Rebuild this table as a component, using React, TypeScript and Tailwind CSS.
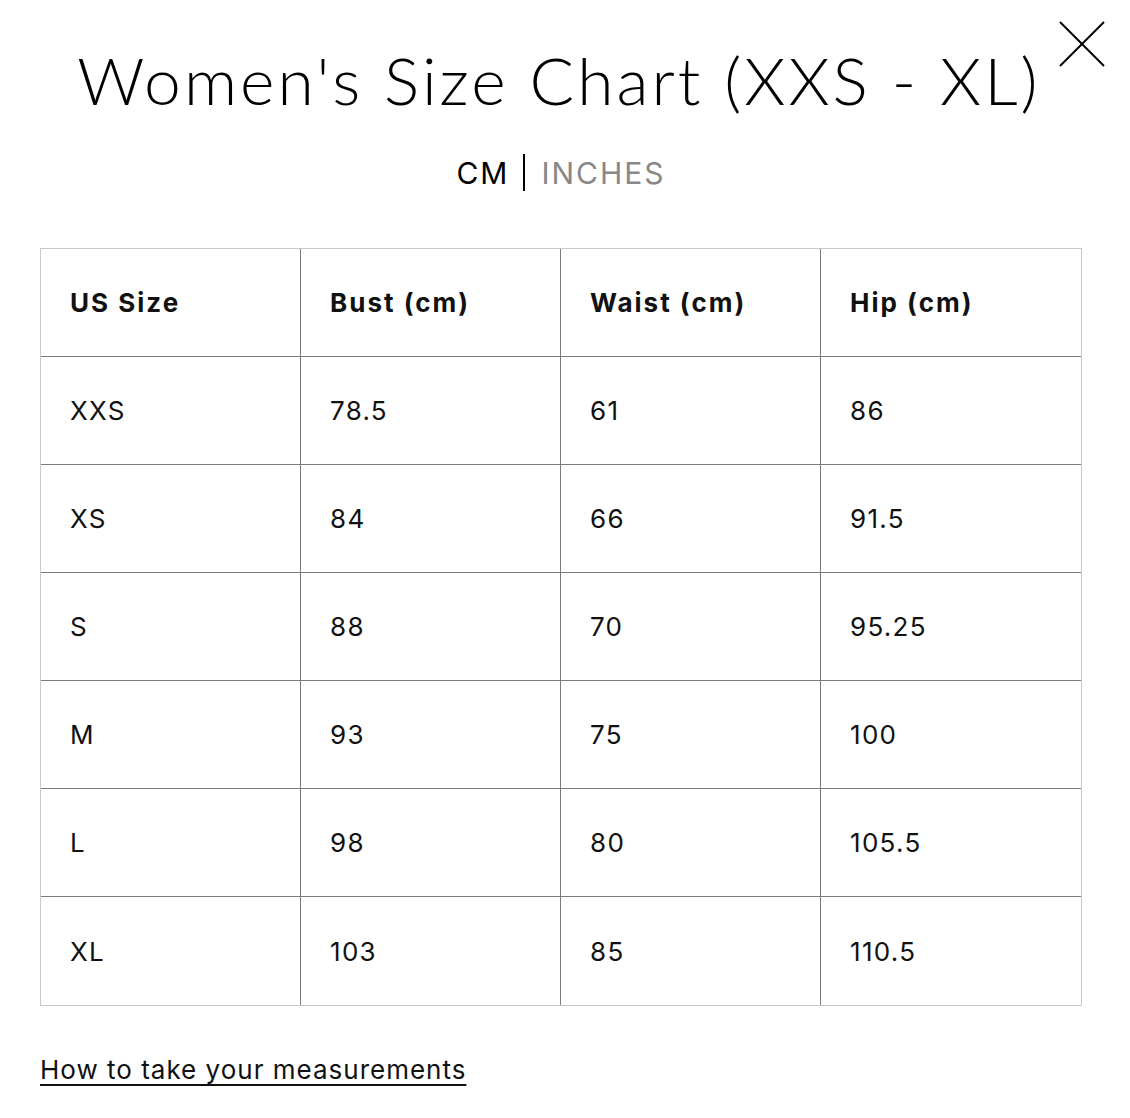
const headers = ["US Size", "Bust (cm)", "Waist (cm)", "Hip (cm)"];

const rows = [
  ["XXS", "78.5", "61", "86"],
  ["XS", "84", "66", "91.5"],
  ["S", "88", "70", "95.25"],
  ["M", "93", "75", "100"],
  ["L", "98", "80", "105.5"],
  ["XL", "103", "85", "110.5"],
];

const Cell = ({ text, col, last, bold }: { text: string; col: number; last: boolean; bold?: boolean }) => (
  <div
    className={
      "h-[108px] flex items-center pl-[29px] " +
      (col < 3 ? "border-r border-[#7c7c7c] " : "") +
      (!last ? "border-b border-[#7c7c7c] " : "") +
      (bold ? "font-bold tracking-[2px]" : "tracking-[1.3px]")
    }
  >
    {text}
  </div>
);

export default function App() {
  return (
    <div className="w-[1130px] h-[1118px] bg-white relative font-['Inter',sans-serif] text-[#111]">
      <button className="absolute left-[1059px] top-[21px]">
        <svg width="46" height="46" viewBox="0 0 46 46" fill="none" stroke="black" strokeWidth="2">
          <line x1="1" y1="1" x2="45" y2="45" />
          <line x1="45" y1="1" x2="1" y2="45" />
        </svg>
      </button>

      <div className="pt-[41px] flex flex-col items-center">
        <h1 className="pr-[12px] font-['Lato',sans-serif] font-light text-[66px] leading-[78px] tracking-[3px] text-black">
          Women's Size Chart (XXS - XL)
        </h1>
        <div className="mt-[35px] pr-[8px] flex items-center text-[30px] leading-[36px] tracking-[2px]">
          <span className="text-black">CM</span>
          <span className="ml-[14px] mr-[16px] w-[2px] h-[37px] bg-black" />
          <span className="text-[#888]">INCHES</span>
        </div>
      </div>

      <div className="mx-[40px] mt-[57px] w-[1042px] border border-[#c9c9c9] grid grid-cols-4 text-[26px]">
        {headers.map((h, i) => (
          <Cell key={h} text={h} col={i} last={false} bold />
        ))}
        {rows.map((r, ri) =>
          r.map((v, ci) => <Cell key={ri + "-" + ci} text={v} col={ci} last={ri === rows.length - 1} />)
        )}
      </div>

      <a className="block ml-[40px] mt-[48px] text-[26px] leading-[32px] tracking-[1px] underline underline-offset-[5px] decoration-[1.5px] text-[#111]">
        How to take your measurements
      </a>
    </div>
  );
}
